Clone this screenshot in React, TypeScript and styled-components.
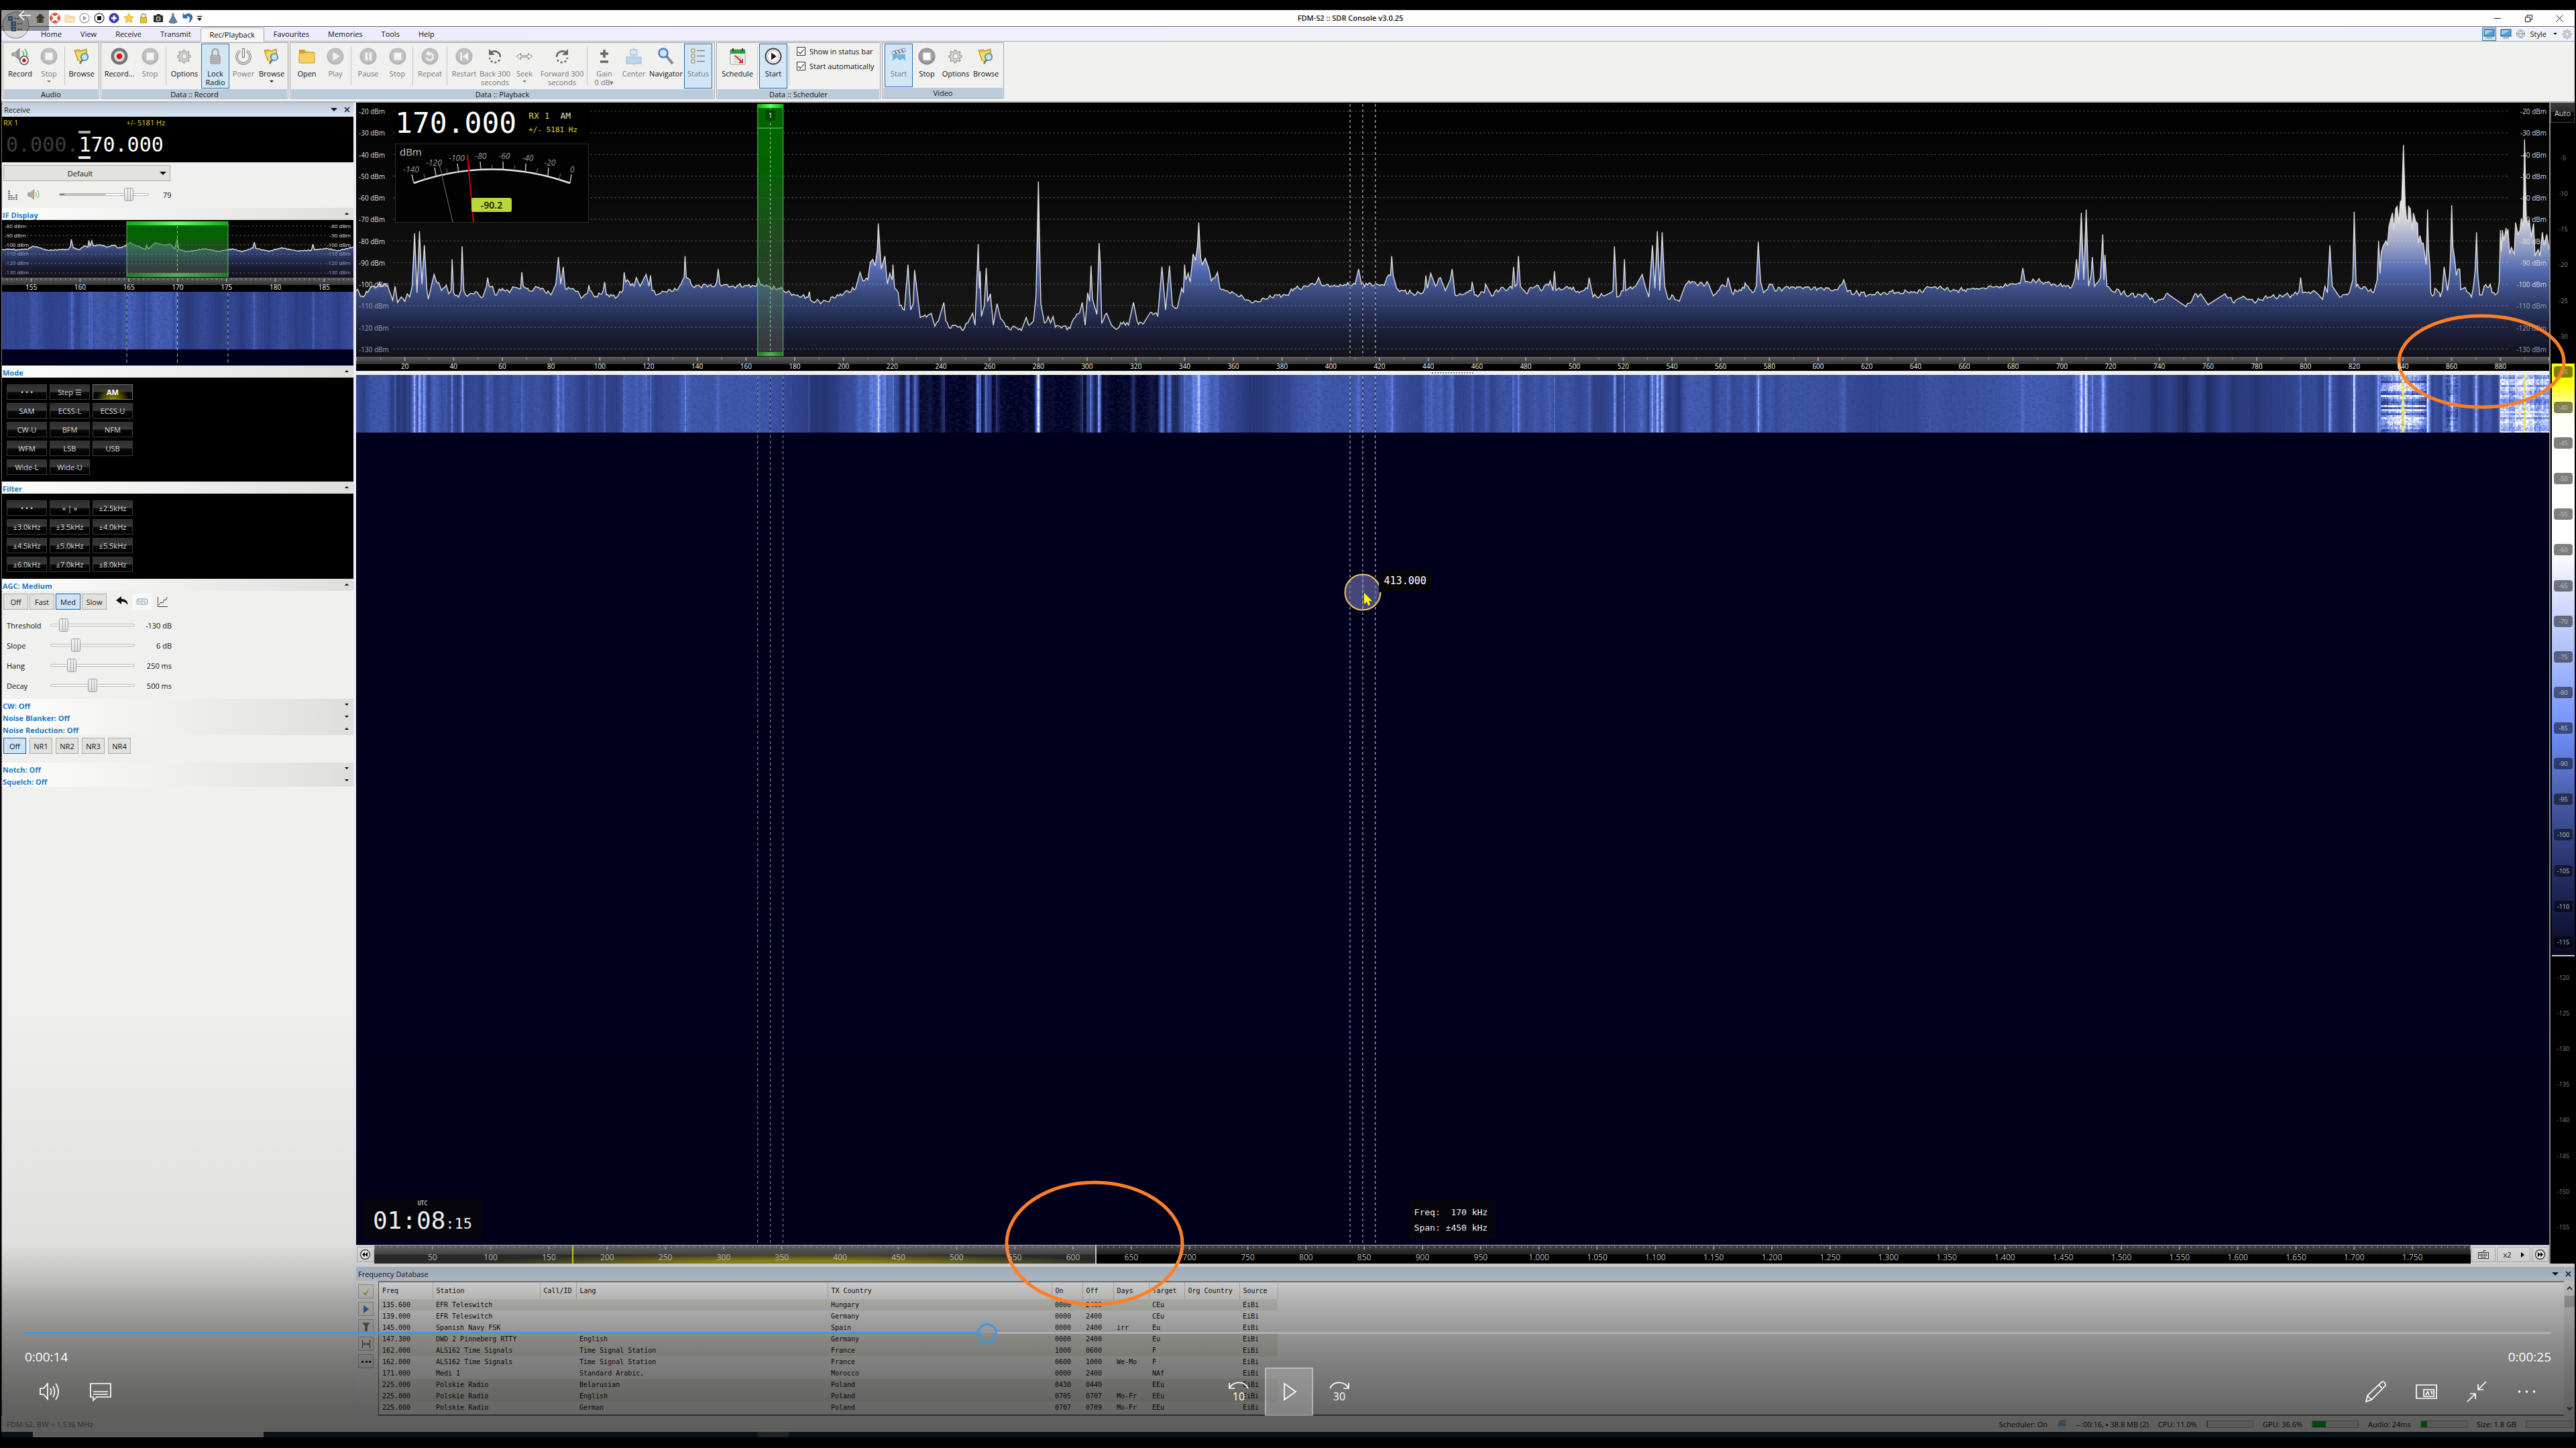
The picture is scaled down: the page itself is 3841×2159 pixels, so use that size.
import React from "react";
import styled, { createGlobalStyle, css } from "styled-components";

/* ---------- base ---------- */

const sans = `"Open Sans", "Noto Sans", sans-serif`;
const mono = `"DejaVu Sans Mono", "Liberation Mono", monospace`;

const GlobalStyle = createGlobalStyle`
  * { box-sizing: border-box; }
  body { margin: 0; background: #000; font-family: ${sans}; font-size: 11px; line-height: 13px; color: #111; }
  button, select, input { font: inherit; color: inherit; margin: 0; }
  button { padding: 0; border: 0; background: none; }
`;

const Screen = styled.div`
  position: relative;
  display: flex;
  flex-direction: column;
  min-height: 100vh;
  padding: 15px 2px 16px 2px;
  background: #000;
  overflow: hidden;
`;

const Window = styled.div`
  flex: 1;
  display: flex;
  flex-direction: column;
  min-height: 0;
  background: #f0f0ee;
`;

/* ---------- signal data: [kHz, dBm] ---------- */

type Point = [number, number];

const wideTrace: Point[] = [
  [0,-103],[3,-106],[6,-101.5],[12,-100],[13,-101],[15,-107.5],[16,-101],[17,-108.5],[18.5,-106],[20,-108],[21,-104.5],[22,-106],[23,-101],
  [24,-76.5],[25,-104],[26,-75.5],[27,-100],[28,-82],[29,-102],[29.6,-107],[32,-95.5],[33,-99],[34,-99.5],[35,-103],[37,-100.5],[38,-104.5],
  [39,-103],[39.4,-88.5],[40,-104],[42,-106],[43,-103],[43.5,-82.5],[44.2,-103],[45,-105],[49,-103.5],[52,-106],[53.5,-101],[54,-97],[54.6,-101],[56,-101],[57,-105],
  [60,-102],[63,-104],[65,-101.5],[67.5,-102],[68,-94.5],[68.6,-101],[71,-103],[75,-101.5],[80,-105],[82,-100],[83,-87.5],[84,-100],[85,-92],[85.8,-102],
  [89,-102],[93,-106],[95,-104],[95.5,-100.5],[96,-103],[99,-106],[101.4,-103],[102,-99],[102.7,-105],[107,-106],[109.5,-103],[110,-94.5],[110.6,-99],[112,-99],[114,-101],
  [115,-97],[116.5,-101],[119,-95.5],[120.3,-101],[120.8,-96],[121.5,-103],[123,-105],[127,-103.5],[132,-102.5],[134,-98],[134.6,-97],[135,-87],[135.5,-97],
  [137,-98],[137.6,-100.5],[146,-101],[148,-99],[148.6,-93],[149.3,-100],[155,-101],[160,-100.5],[164.5,-100.5],[165,-97],[166,-100.5],[175,-102.5],[180,-105],[185.5,-106],[186,-103.5],[186.5,-107.5],[190,-108],
  [193,-108],[200,-104.5],[205,-102],[206.8,-94.5],[208,-98.5],[210,-98],[211,-90],[212,-88.5],[213,-91.5],[213.9,-84],[214.3,-72],[214.9,-82],[215.5,-93],
  [217,-87],[218,-100],[219,-95],[220,-98],[220.3,-91],[221,-102],[222.5,-104],[223,-110],[225,-112],[226,-98],[226.5,-91],[227,-101],[227.6,-112],[228.6,-109],[229.2,-93.5],
  [230.5,-106],[231.5,-115.5],[236,-113.5],[237.5,-119.5],[239,-117],[241.2,-108.5],[242,-117],[244,-120.5],[246,-119],[249,-121.5],[251,-118],
  [253,-113.5],[254,-119],[255.3,-81.5],[255.8,-102],[256.1,-94],[256.6,-115],[257.8,-110],[258.6,-92.5],[259.2,-108],[260.3,-104.5],[261.5,-119],[263,-109],[264.5,-116],[266,-118],
  [268,-121],[270,-119.5],[273,-121.5],[275,-115.5],[276,-119],[278,-117],[279,-106],[280,-52.5],[281,-109],[282.5,-118],[284,-115],[285,-118],[286,-115],[287,-120],[290,-119.5],
  [293,-120.5],[294.5,-116],[297,-113],[298,-108.5],[299.2,-119],[300.2,-104],[301,-108],[301.6,-91.5],[302.2,-107],[304,-114],[304.9,-81],[305.4,-90],[306,-118],[308,-113.5],
  [310,-119],[312,-121],[315,-117.5],[317,-119],[319,-108.5],[320.5,-117],[323,-118.5],[326,-113],[329,-115],[330.7,-92],[332.2,-112],[333.8,-91.5],[335,-110],
  [337,-111],[338.8,-102],[339.5,-104],[340,-91],[340.5,-98],[341.5,-95],[342.3,-99],[343.5,-86],[344.5,-89],[345.3,-82],[345.8,-71.5],[346.6,-88],[347.3,-91],[348.5,-88],[350,-93],[351,-98.5],[352.5,-97],
  [353.5,-94.5],[354.5,-102],[360,-104],[367,-108],[373,-107],[377,-105],[382,-105],[385,-102],[390,-101],[394,-99.5],[395,-97],[396,-100],[402,-101],[410,-100],[411.4,-93],
  [412.6,-100],[422,-100.5],[423,-97],[424.5,-96],[425,-87],[425.6,-96],[427,-102],[433,-104],[437,-104.5],[438.6,-102],[439,-96],[439.6,-102],[441,-95],[443,-101],[445,-97],
  [447,-103],[449,-98],[449.8,-93],[451,-105],[455,-104.5],[457.6,-103],[458,-99],[459,-105],[463,-104],[463.5,-100],[466,-105.5],[470,-101.5],[474.4,-102],[475,-92],[475.6,-101],[476.4,-100],
  [477,-87],[477.8,-101],[480,-104],[484,-101],[487,-102.5],[490,-98.5],[491.2,-103],[491.8,-94],[492.4,-103],[497,-101],[502,-104],[505.4,-102],[506,-97],[507.6,-106],[513,-105],
  [515.8,-103],[516.4,-82.5],[517.4,-106],[520,-103],[520.5,-88.5],[521,-103],[525,-101],[527.8,-95.5],[529,-101],[530.5,-106],[532,-82],[533,-102],[534,-75.5],
  [535,-103],[536,-76],[537,-101],[538.4,-107],[540,-105],[543,-108],[545,-102],[547,-98.5],[550,-100],[555,-100],[557,-105.5],[560,-101],[562.4,-101],[563,-97],[564.6,-104],[569.6,-102],[570,-99.5],
  [573,-104],[574.6,-101],[575.4,-80.5],[576.4,-99],[577.6,-104],[580,-100],[583,-103],[587,-101],[592,-101.5],[600,-102],[608,-102.5],[609.8,-100],[610.5,-98],[612,-103.5],[622,-105],[630,-103.5],
  [640,-104],[646,-101.5],[655,-103],[665,-102],[675,-101],[683,-99.5],[684,-92.5],[685,-99],[690,-98.5],[697,-100],[704,-101.5],[705.4,-97],[706,-88.5],[706.8,-98],
  [708,-67],[709,-98],[710,-65.5],[711,-101],[712,-96],[712.5,-87.5],[713.4,-101],[715.8,-97],[716.8,-77],[717.3,-98],[717.7,-86.5],[718.5,-101],[720,-102.5],
  [728,-105],[735,-105],[738,-108.5],[744,-105],[751,-110.5],[754,-106],[757,-104.5],[760,-109.5],[767,-104.5],[770,-108],[775,-106],[780,-108],[785,-106],[795,-105],
  [797.4,-103],[798,-97],[798.8,-104],[804,-103.5],[807,-107],[808,-101],[809,-104],[810,-82],[811,-101],[814,-106],[818,-104],[819.4,-98],[820,-66.5],[820.8,-101],
  [825,-102],[828,-104],[829.4,-98],[830,-80],[830.6,-95],[831.1,-85],[832,-82],[833,-80],[833.6,-82],[834.3,-73],[835.7,-67],[836.3,-75],[837,-65],[837.6,-64],[838.3,-72],
  [838.9,-62],[839.5,-61],[840.2,-35.5],[840.9,-63],[841.5,-70],[842.1,-71],[842.3,-64],[843,-65],[843.8,-75],[844.3,-67],[845.2,-71],[846,-72],[846.3,-81],[847,-77.5],
  [847.6,-81],[848.3,-81],[849.5,-91],[850.1,-65.5],[850.5,-84],[851.1,-92],[851.4,-104],[852.7,-105],[853.1,-102],[855,-104],[855.3,-106],[856.1,-103],[856.9,-92],
  [857.5,-97],[858.3,-103],[859.1,-96],[859.5,-87],[860,-63.5],[860.5,-83],[861.2,-88],[861.9,-96],[862.6,-93],[863.3,-93],[863.7,-102.5],[865.5,-101.5],[866.9,-104],
  [868.1,-106],[868.8,-102],[869.6,-94],[870.2,-76],[870.7,-95],[871.5,-105],[872.4,-105],[873.3,-101],[875.8,-100],[876.6,-104],[877.9,-105],[878.9,-104],[879.5,-99],
  [880,-75],[880.4,-85],[880.8,-75],[881.4,-80],[882.3,-74],[882.5,-77],[883.1,-74.5],[883.8,-86],[884.5,-83],[885.7,-86],[886.2,-71.5],[887.2,-77],[888,-75],[888.6,-69.5],
  [889.3,-74],[889.9,-33],[890.6,-69],[891.3,-73],[891.8,-70],[892.6,-78],[893.6,-72],[894.2,-87],[895.5,-84],[896.2,-87],[897.2,-76],[897.9,-82],[899,-77],[900,-84],
];

const narrowTrace: Point[] = [
  [152,-105],[152.6,-104],[153.6,-105],[154.7,-104],[155.2,-101],[156.7,-105.5],[158.8,-104.5],[159,-102],[159.1,-94],[159.3,-103],[159.9,-105],[160.4,-101],[160.8,-102],[160.9,-95],[161,-101],[161.2,-95.5],
  [161.35,-101],[162,-99.5],[162.8,-102],[163.5,-100],[163.9,-103],[164.6,-101],[165.1,-97.5],[165.8,-101],[166.7,-104.5],[166.8,-100],[167,-104],[167.7,-97.5],[168.6,-100],
  [169.2,-99],[169.7,-104],[169.95,-93],[170.1,-104.5],[170.9,-107],[172.8,-104],[174.2,-106.5],[175.6,-104],[176.6,-107],[177.7,-103],[177.85,-97],[178,-103.5],[179.4,-106.5],
  [180.6,-103],[182.2,-106],[183.7,-105.5],[183.85,-99],[184,-105],[185.3,-103.5],[186.4,-106],[188,-102],
];

const hash = (n: number) => {
  const s = Math.sin(n * 127.1 + 11.7) * 43758.5453;
  return s - Math.floor(s);
};

function refine(points: Point[], step: number, jitter: number): Point[] {
  const out: Point[] = [];
  points.forEach((p, i) => {
    out.push(p);
    const next = points[i + 1];
    if (!next) return;
    const span = next[0] - p[0];
    const n = Math.floor(span / step);
    const flat = Math.abs(next[1] - p[1]) < 5;
    for (let k = 1; k < n; k++) {
      const f = p[0] + (span * k) / n;
      const ripple = flat ? (hash(f) - 0.5) * jitter + Math.sin((f / step) * 1.3) * jitter * 0.35 : 0;
      out.push([f, p[1] + ((next[1] - p[1]) * k) / n + ripple]);
    }
  });
  return out;
}

const stops: [number, number[]][] = [
  [-122, [0, 0, 30]], [-115, [8, 10, 44]], [-110, [32, 44, 96]], [-105, [50, 68, 142]], [-100, [67, 91, 174]], [-92, [84, 114, 208]],
  [-85, [112, 142, 245]], [-75, [170, 190, 255]], [-64, [250, 252, 255]], [-48, [255, 255, 250]], [-36, [238, 232, 90]],
];

function palette(db: number) {
  if (db <= stops[0][0]) return "rgb(0,0,30)";
  for (let i = 1; i < stops.length; i++) {
    if (db <= stops[i][0]) {
      const [a, ca] = stops[i - 1];
      const [b, cb] = stops[i];
      const t = (db - a) / (b - a);
      return `rgb(${ca.map((c, k) => Math.round(c + (cb[k] - c) * t)).join(",")})`;
    }
  }
  return "rgb(238,232,90)";
}

function interpolate(points: Point[], f: number) {
  const i = points.findIndex(p => p[0] >= f);
  if (i <= 0) return points[0][1];
  const [a, b] = [points[i - 1], points[i]];
  return a[1] + ((b[1] - a[1]) * (f - a[0])) / (b[0] - a[0]);
}

function levelAt(points: Point[], from: number, to: number) {
  const mid = interpolate(points, (from + to) / 2);
  const peaks = points.filter(([f]) => f >= from && f < to).map(p => p[1]);
  return Math.max(mid, ...peaks);
}

/* ---------- title bar and tabs ---------- */

const TitleBar = styled.header`
  display: flex;
  align-items: center;
  height: 24px;
  padding-left: 50px;
  background: #fff;
`;
const QuickBar = styled.div`
  display: flex;
  align-items: center;
  gap: 6px;
`;
const QuickButton = styled.button`
  display: flex;
  width: 16px;
  height: 16px;
`;
const WindowTitle = styled.h1`
  flex: 1;
  margin: 0;
  padding-left: 16px;
  text-align: center;
  font-size: 11px;
  font-weight: 600;
  line-height: 16px;
`;
const Caption = styled.button`
  display: flex;
  align-items: center;
  justify-content: center;
  width: 46px;
  height: 24px;
`;
const AppButton = styled.button`
  position: absolute;
  left: 3px;
  top: 17px;
  width: 41px;
  height: 41px;
`;
const TabBar = styled.nav`
  display: flex;
  align-items: flex-end;
  height: 23px;
  padding: 0 2px 0 45px;
  border-top: 1px solid #6c6c70;
  border-bottom: 1px solid #a8a8ac;
  background: linear-gradient(90deg, #ebebfa, #eff1fb 50%, #eef3fb);
`;
const Tab = styled.button<{ $active?: boolean }>`
  height: 20px;
  padding: 0 14px;
  line-height: 20px;
  ${p => p.$active && css`
    height: 21px;
    margin-bottom: -1px;
    padding: 0 13px;
    border: 1px solid #a8a8ac;
    border-bottom: 0;
    border-radius: 4px 4px 0 0;
    background: #f6f6f5;
  `}
`;
const TabTools = styled.div`
  display: flex;
  align-items: center;
  gap: 6px;
  height: 21px;
  margin-left: auto;
`;
const ToolButton = styled.button<{ $on?: boolean }>`
  display: flex;
  align-items: center;
  justify-content: center;
  gap: 10px;
  min-width: 16px;
  height: 20px;
  ${p => p.$on && css`
    width: 21px;
    border: 1px solid #2f78ae;
    background: #cfe4f5;
  `}
`;

/* ---------- ribbon ---------- */

const Ribbon = styled.div`
  display: flex;
  gap: 2px;
  height: 91px;
  padding: 1px 2px 4px 2px;
  border-bottom: 2px solid #b4b4b4;
  background: #f0f0ee;
`;
const Group = styled.section`
  display: flex;
  flex-direction: column;
  border: 1px solid #a5a5a8;
  background: #f0f0ee;
`;
const GroupBody = styled.div`
  display: flex;
  flex: 1;
  padding: 1px 3px;
`;
const GroupName = styled.h2`
  height: 15px;
  margin: 0 1px;
  background: #bccbda;
  text-align: center;
  font-size: 11px;
  font-weight: 400;
  line-height: 15px;
`;
const BigButton = styled.button<{ $w: number; $on?: boolean; $dim?: boolean }>`
  display: flex;
  flex-direction: column;
  align-items: center;
  width: ${p => p.$w}px;
  padding-top: 5px;
  border: 1px solid ${p => (p.$on ? "#1e70b8" : "transparent")};
  background: ${p => (p.$on ? "#d2e6f6" : "none")};
  color: ${p => (p.$dim ? "#77797c" : "#111")};
  white-space: nowrap;
  svg { margin-bottom: 6px; flex: none; }
`;
const Divider = styled.span`
  width: 1px;
  height: 57px;
  margin: 5px 2px;
  background: #c4c4c4;
`;
const Checks = styled.div`
  display: flex;
  flex-direction: column;
  gap: 8px;
  width: 130px;
  padding: 4px 0 0 9px;
`;
const CheckLabel = styled.label`
  display: flex;
  align-items: center;
  gap: 6px;
  height: 14px;
  white-space: nowrap;
`;
const CheckBox = styled.input`
  appearance: none;
  width: 13px;
  height: 13px;
  border: 1px solid #333;
  background: #fff;
  display: grid;
  place-items: center;
  &:checked::after {
    content: "";
    width: 8px;
    height: 4px;
    border-left: 1px solid #222;
    border-bottom: 1px solid #222;
    transform: translateY(-1px) rotate(-48deg);
  }
`;
const Caret = styled.span<{ $up?: boolean; $big?: boolean }>`
  width: 0;
  height: 0;
  border: ${p => (p.$big ? 5 : 3)}px solid transparent;
  ${p => (p.$up ? css`border-bottom-color: currentColor; border-top: 0;` : css`border-top-color: currentColor; border-bottom: 0;`)}
`;
const DropCaret = styled(Caret)`
  margin-top: 4px;
`;

/* ---------- icons ---------- */

const gear = "M13 5l1 0 .6 2.6 2 .8 2.3-1.4 1.6 1.6-1.4 2.3.8 2 2.6.6v2.2l-2.6.6-.8 2 1.4 2.3-1.6 1.6-2.3-1.4-2 .8-.6 2.6h-2.2l-.6-2.6-2-.8-2.3 1.4-1.6-1.6 1.4-2.3-.8-2-2.6-.6v-2.2l2.6-.6.8-2-1.4-2.3 1.6-1.6 2.3 1.4 2-.8.6-2.6z";

function Disc({ shade = "#b4b4b4", children }: { shade?: string; children: React.ReactNode }) {
  return (
    <>
      <circle cx="13" cy="13" r="12.5" fill={shade} />
      <circle cx="13" cy="12" r="10.5" fill="#fff" opacity=".18" />
      {children}
    </>
  );
}

const art: Record<string, React.ReactNode> = {
  recordAudio: (
    <>
      <path d="M1 8h4l7-7v18l-7-7H1z" fill="#c9b48a" stroke="#777" />
      <path d="M7 6l5-5v18l-5-5z" fill="#9a9a9a" />
      <path d="M16 5c3 3 3 6 1 9M20 2c4 5 4 9 2 13" fill="none" stroke="#5fc95a" strokeWidth="2" />
      <circle cx="19" cy="19" r="6.2" fill="#fff" stroke="#555" strokeWidth="1.5" />
      <circle cx="19" cy="19" r="2.8" fill="#d80d0d" />
    </>
  ),
  stop: <Disc><rect x="7.5" y="7.5" width="11" height="11" rx="1" fill="#f4f4f4" /></Disc>,
  stopOn: <Disc shade="#8d8d8d"><rect x="7.5" y="7.5" width="11" height="11" rx="1" fill="#fff" /></Disc>,
  record: (
    <>
      <circle cx="13" cy="13" r="12.5" fill="#757575" />
      <circle cx="13" cy="13" r="8" fill="#dcdcdc" />
      <circle cx="13" cy="13" r="4.2" fill="#f00" />
    </>
  ),
  play: <Disc><path d="M9.5 6.5v13l10-6.5z" fill="#f4f4f4" /></Disc>,
  pause: <Disc><path d="M8.5 7h3.5v12h-3.5zM14.5 7h3.5v12h-3.5z" fill="#f4f4f4" /></Disc>,
  repeat: <Disc><path d="M8 15a5 5 0 1 0 2-5.5M11.5 5.5l-2.5 4 4.5 1.5" fill="none" stroke="#f4f4f4" strokeWidth="2.4" /></Disc>,
  restart: <Disc><path d="M7.5 7h2.5v12h-2.5zM19 7v12l-8-6z" fill="#f4f4f4" /></Disc>,
  startRound: (
    <>
      <circle cx="13" cy="13" r="11.5" fill="#fff" stroke="#444" strokeWidth="2" />
      <circle cx="13" cy="13" r="8.5" fill="none" stroke="#aaa" />
      <path d="M10 7.5v11l8-5.5z" fill="#1c1c1c" />
    </>
  ),
  browse: (
    <>
      <path d="M2 4l7-1 2 2 9-3 1 14-9 5-5-2z" fill="#e6c23c" stroke="#a8871c" />
      <path d="M4 8l14-3 3 9-12 6z" fill="#f3da6d" />
      <circle cx="17" cy="14" r="5.2" fill="#bfe6f5" stroke="#4e8fb0" strokeWidth="1.8" />
      <path d="M14 18l-4 6" stroke="#777" strokeWidth="2.5" />
    </>
  ),
  open: (
    <>
      <path d="M1 3h8l2 3h12v17H1z" fill="#d99a1c" />
      <path d="M1 9c8-1 15-3 23-2v16H1z" fill="#f6cf63" stroke="#d39a25" />
    </>
  ),
  options: (
    <>
      <path d={gear} fill="#d6d6d6" stroke="#999" strokeWidth="1.2" transform="translate(-.5 -1.5)" />
      <circle cx="13" cy="13" r="4" fill="#f0f0ee" stroke="#999" />
    </>
  ),
  lock: (
    <>
      <path d="M8.5 13V6.5a4.5 4.5 0 0 1 9 0V13" fill="none" stroke="#999" strokeWidth="2" />
      <rect x="6" y="12" width="14" height="12" rx="1" fill="#c3c3c3" stroke="#888" />
      <path d="M7 15h12M7 18h12M7 21h12" stroke="#8b8b8b" />
    </>
  ),
  power: (
    <>
      <path d="M8 5a10 10 0 1 0 10 0" fill="none" stroke="#777" strokeWidth="3.5" />
      <path d="M8 5a10 10 0 1 0 10 0" fill="none" stroke="#eee" strokeWidth="1.5" />
      <rect x="11.5" y="1.5" width="3" height="13" fill="#eee" stroke="#777" />
    </>
  ),
  back: (
    <>
      <path d="M7 7c6-4 14 0 14 7" fill="none" stroke="#666" strokeWidth="2.6" />
      <path d="M20 18a8 8 0 0 1-15-3" fill="none" stroke="#666" strokeWidth="2.6" strokeDasharray="3 3" />
      <path d="M4 2v9h9z" fill="#666" />
    </>
  ),
  forward: (
    <>
      <path d="M19 7C13 3 5 7 5 14" fill="none" stroke="#666" strokeWidth="2.6" />
      <path d="M6 18a8 8 0 0 0 15-3" fill="none" stroke="#666" strokeWidth="2.6" strokeDasharray="3 3" />
      <path d="M22 2v9h-9z" fill="#666" />
    </>
  ),
  seek: <path d="M1.5 13l6-4.5v3.5h11V8.5l6 4.5-6 4.5V14h-11v3.5z" fill="#fff" stroke="#777" />,
  gain: <path d="M7 9h12M13 3v12M7 21h12" stroke="#666" strokeWidth="3.5" />,
  center: (
    <>
      <path d="M13 0v26" stroke="#8aa2b8" />
      <rect x="8" y="3" width="10" height="8" fill="#d5e5f2" stroke="#9ab2c8" />
      <rect x="2" y="14" width="22" height="10" fill="#b9d8f0" stroke="#9ab8d2" />
    </>
  ),
  navigator: (
    <>
      <path d="M14 13l9 11" stroke="#888" strokeWidth="4" />
      <circle cx="9" cy="8" r="6.5" fill="#cdeafc" stroke="#4a7fc4" strokeWidth="2.5" />
    </>
  ),
  status: (
    <>
      <path d="M3 2h5v5H3zM3 10h5v5H3z" fill="#efe6a4" stroke="#888" />
      <path d="M3 18h5v5H3z" fill="#cfe6fb" stroke="#888" />
      <path d="M11 4.500h12M11 12.500h12M11 20.500h12" stroke="#888" strokeWidth="1.5" />
    </>
  ),
  schedule: (
    <>
      <rect x="2" y="3" width="22" height="22" rx="1" fill="#f7f7f7" stroke="#999" />
      <path d="M2 3h22v6H2z" fill="#2f9c31" />
      <path d="M6 1v4M20 1v4" stroke="#333" strokeWidth="2" />
      <path d="M5 13h16M5 17h16M5 21h16M9 10v14M13 10v14M17 10v14" stroke="#c4c4c4" />
      <path d="M9 12l11 10M20 17v5h-5" fill="none" stroke="#cc2a2a" strokeWidth="1.8" />
    </>
  ),
  clapper: (
    <>
      <path d="M3 6l19-5 1 5-19 4z" fill="#e6eef4" stroke="#889" />
      <path d="M7 5l3 4M12 4l3 4M17 3l3 4" stroke="#667" strokeWidth="2" />
      <rect x="4" y="10" width="19" height="15" fill="#6fb6dc" />
      <path d="M4 20l6-5 5 4 4-3 4 4v5H4z" fill="#cfeaf7" />
    </>
  ),
};

function Icon({ name, size = 26 }: { name: string; size?: number }) {
  return <svg width={size} height={size} viewBox="0 0 26 26" aria-hidden="true">{art[name]}</svg>;
}

const quick: [string, React.ReactNode][] = [
  ["Home", <><path d="M1 8l7-7 7 7z" fill="#5f5a52" /><path d="M3 8h10v7H3z" fill="#8c877c" /><path d="M6 9h4v6H6z" fill="#8a4a12" /></>],
  ["Support", <><circle cx="8" cy="8" r="5.3" fill="none" stroke="#e3592b" strokeWidth="4" /><path d="M3 3l3 3M10 10l3 3M13 3l-3 3M6 10l-3 3" stroke="#fff" strokeWidth="2.5" /><circle cx="8" cy="8" r="7.5" fill="none" stroke="#a03a14" strokeWidth=".8" /></>],
  ["Open", <path d="M1 3h5l2 2h7v9H1zM1 14l2-7h13l-2 7z" fill="#fbe7bd" stroke="#ecd09a" />],
  ["Play", <><circle cx="8" cy="8" r="7" fill="#fff" stroke="#aaa" strokeWidth="1.5" /><path d="M6 4.5v7l5.5-3.5z" fill="#999" /></>],
  ["Stop", <><circle cx="8" cy="8" r="7" fill="#fff" stroke="#555" strokeWidth="1.5" /><rect x="5" y="5" width="6" height="6" fill="#111" /></>],
  ["Add", <><circle cx="8" cy="8" r="7" fill="#3d3dbd" stroke="#24248a" /><path d="M8 4v8M4 8h8" stroke="#fff" strokeWidth="2.5" /></>],
  ["Favourite", <path d="M8 1l2.1 4.7 5.1.5-3.9 3.4 1.2 5L8 12l-4.5 2.6 1.2-5L.8 6.2l5.1-.5z" fill="#fcd34a" stroke="#d99b22" />],
  ["Lock", <><path d="M5 8V4.5a3 3 0 0 1 6 0V8" fill="none" stroke="#999" strokeWidth="1.6" /><rect x="3.5" y="7" width="9" height="8" fill="#f0c419" stroke="#b98e10" /></>],
  ["Snapshot", <><path d="M1 4h4l1-2h5l1 2h3v10H1z" fill="#2a2a2a" /><circle cx="8" cy="9" r="3.5" fill="#bbb" /><circle cx="8" cy="9" r="2" fill="#333" /></>],
  ["Marker", <><path d="M8 3l6 11c-3 2-9 2-12 0z" fill="#5f86b4" stroke="#3d5c86" /><circle cx="8" cy="2.5" r="2" fill="#5f86b4" /></>],
  ["Undo", <path d="M1 1v7h7L5.500 5.500c4-2 8 1 4.500 9 7-5 6-13-1-13-2 0-4 1-5.500 2z" fill="#2f6fc6" stroke="#1f4f9a" strokeWidth=".7" />],
];

/* ---------- side panel ---------- */

const Workspace = styled.div`
  flex: 1;
  display: flex;
  min-height: 0;
`;
const Side = styled.aside`
  width: 529px;
  flex: none;
  border-left: 1px solid #707070;
  border-right: 4px solid #ecebf7;
  background: #f0f0ee;
`;
const DockTitle = styled.h2`
  display: flex;
  align-items: center;
  gap: 8px;
  height: 21px;
  margin: 0;
  padding: 0 4px 0 3px;
  background: linear-gradient(#bccbdc, #d9e4f1);
  font-size: 11px;
  font-weight: 400;
  span:first-child { flex: 1; }
`;
const DockClose = styled.button`
  display: flex;
  align-items: center;
  justify-content: center;
  width: 12px;
  height: 16px;
`;
const Tuner = styled.div`
  display: flex;
  flex-direction: column;
  height: 68px;
  padding: 2px 0 0 2px;
  background: #000;
  color: #e5d42a;
`;
const TunerTop = styled.div`
  display: flex;
  gap: 161px;
`;
const TunerDigits = styled.div`
  display: flex;
  margin: 6px 0 0 4px;
  font-family: ${mono};
  font-size: 30px;
  line-height: 42px;
  color: #3c3c3c;
`;
const Digits = styled.span<{ $edit?: boolean }>`
  color: #fff;
  ${p => p.$edit && css`
    height: 42px;
    border-top: 4px solid #aaa;
    border-bottom: 4px solid #eee;
    line-height: 34px;
  `}
`;
const Presets = styled.div`
  padding: 4px 2px 0;
`;
const PresetSelect = styled.select`
  display: block;
  width: 249px;
  height: 24px;
  padding: 0 20px 0 0;
  border: 1px solid #aaa;
  border-radius: 0;
  appearance: none;
  background: #e2e2df;
  text-align: center;
  text-align-last: center;
`;
const SelectWrap = styled.div`
  position: relative;
  width: 249px;
  > span { position: absolute; right: 6px; top: 10px; }
`;
const VolumeRow = styled.div`
  display: flex;
  align-items: center;
  height: 40px;
  padding-left: 6px;
  svg { margin-right: 14px; }
  input { margin-left: 15px; }
  output { margin-left: 21px; }
`;
const Range = styled.input<{ $w: number; $fill?: boolean }>`
  appearance: none;
  width: ${p => p.$w}px;
  height: 22px;
  background: none;
  &::-webkit-slider-runnable-track {
    height: 4px;
    border: 1px solid #b8b8b8;
    border-radius: 2px;
    background: ${p => (p.$fill ? "linear-gradient(90deg, #4e9a4e 5%, #c0c0bd 5%, #c0c0bd 52%, #fff 52%)" : "#fff")};
  }
  &::-webkit-slider-thumb {
    appearance: none;
    width: 14px;
    height: 20px;
    margin-top: -9px;
    border: 1px solid #a2a2a2;
    border-radius: 3px;
    background: linear-gradient(90deg, transparent 4px, #aaa 4px, #aaa 5px, transparent 5px, transparent 8px, #aaa 8px, #aaa 9px, transparent 9px), linear-gradient(#f4f4f4, #dcdcdc);
  }
`;
const Section = styled.h3`
  display: flex;
  align-items: center;
  justify-content: space-between;
  height: 18px;
  margin: 0;
  padding: 3px 7px 0 1px;
  background: linear-gradient(90deg, #fdfdfc, #ededeb 55%, #dededb);
  color: #1c7ac8;
  font-size: 11px;
  font-weight: 700;
  line-height: 15px;
  > span:last-child { color: #000; margin-bottom: 4px; }
`;
const Pad = styled.div`
  display: grid;
  grid-template-columns: repeat(3, 60px);
  grid-auto-rows: 23px;
  gap: 5px 4px;
  padding: 10px 7px;
  background: #000;
`;
const PadButton = styled.button<{ $on?: boolean }>`
  border: 1px solid ${p => (p.$on ? "#777" : "#3a3a3a")};
  background: ${p => (p.$on ? "radial-gradient(ellipse at 50% 100%, #8f8800, #4a4600 35%, transparent 60%)," : "")} linear-gradient(#2e2e2e, #3a3a3a 48%, #0a0a0a 52%, #000);
  color: ${p => (p.$on ? "#fff" : "#dadada")};
  font-weight: ${p => (p.$on ? 700 : 400)};
`;
const ToggleRow = styled.div<{ $gap: number }>`
  display: flex;
  gap: ${p => p.$gap}px;
  padding: 4px 2px 0;
`;
const Toggle = styled.button<{ $w: number; $on?: boolean }>`
  width: ${p => p.$w}px;
  height: 24px;
  border: 1px solid ${p => (p.$on ? "#2b6292" : "#acacac")};
  background: ${p => (p.$on ? "#cde4f7" : "#e1e1de")};
`;
const IconTile = styled.button<{ $lit?: boolean }>`
  display: flex;
  align-items: center;
  justify-content: center;
  width: 28px;
  height: 24px;
  background: ${p => (p.$lit ? "#f8f8f7" : "none")};
`;
const AgcTools = styled.div`
  display: flex;
  gap: 2px;
  margin-left: 7px;
`;
const AgcBody = styled.div`
  height: 161px;
`;
const SliderRow = styled.div`
  display: grid;
  grid-template-columns: 65px 126px 55px;
  align-items: center;
  height: 30px;
  padding-left: 7px;
  output { text-align: right; }
`;
const AgcRows = styled.div`
  margin-top: 8px;
`;
const NrBody = styled.div`
  height: 41px;
`;

/* ---------- spectrum displays ---------- */

const Stack = styled.div`
  position: relative;
`;
const Plot = styled.svg<{ $h: number }>`
  display: block;
  width: 100%;
  height: ${p => p.$h}px;
  background: linear-gradient(#000, #161616 85%);
`;
const Fill = styled.svg`
  position: absolute;
  inset: 0;
  width: 100%;
  height: 100%;
`;
const DbLabels = styled.div<{ $right?: boolean; $small?: boolean }>`
  position: absolute;
  top: ${p => (p.$small ? 3 : 5)}px;
  bottom: ${p => (p.$small ? 2 : 3)}px;
  ${p => (p.$right ? "right: 4px;" : "left: 4px;")}
  display: flex;
  flex-direction: column;
  justify-content: space-between;
  align-items: ${p => (p.$right ? "flex-end" : "flex-start")};
  color: #ddd;
  font-size: ${p => (p.$small ? 8 : 10)}px;
  line-height: ${p => (p.$small ? 12 : 16)}px;
  span:nth-last-child(-n + 3) { color: #9aa1bd; }
`;
const Ruler = styled.div<{ $cells: string; $size: number }>`
  position: relative;
  display: grid;
  grid-template-columns: ${p => p.$cells};
  height: 21px;
  background: linear-gradient(#5c5c5c, #333 50%, #000 55%);
  color: #f4f4f4;
  text-align: center;
  font-size: ${p => p.$size}px;
  line-height: 12px;
  > span { padding-top: 8px; min-width: 0; z-index: 1; }
`;
const MiniFall = styled.div`
  position: relative;
  height: 110px;
  background: #00001e;
`;
const Display = styled.div`
  flex: 1;
  display: flex;
  flex-direction: column;
  min-width: 0;
`;
const Splitter = styled.div`
  display: flex;
  justify-content: center;
  align-items: center;
  height: 6px;
  background: #f0f0ee;
  &::after {
    content: "";
    width: 62px;
    height: 2px;
    background: repeating-linear-gradient(90deg, #888 0 2px, transparent 2px 4px);
  }
`;
const FallPane = styled.div`
  position: relative;
  flex: 1;
  background: #00001e;
`;
const Readout = styled.div`
  position: absolute;
  left: 58px;
  top: 8px;
  width: 289px;
  display: flex;
  flex-direction: column;
  background: #000;
`;
const ReadoutRow = styled.div`
  display: flex;
  align-items: center;
  gap: 18px;
  height: 44px;
  font-family: ${mono};
  color: #fff;
  strong { font-size: 43px; font-weight: 400; line-height: 44px; }
`;
const ReadoutNotes = styled.div`
  display: flex;
  flex-direction: column;
  gap: 5px;
  font-size: 13px;
  line-height: 16px;
  color: #e5d42a;
  em { font-style: normal; color: #ddd; margin-left: 16px; }
  small { font-size: 11px; line-height: 16px; }
`;
const Meter = styled.svg`
  display: block;
  margin-top: 9px;
  font-family: ${sans};
`;
const Cursor = styled.svg`
  position: absolute;
  left: calc(100% * 413 / 900 - 28px);
  top: 296px;
`;
const CursorTag = styled.div`
  position: absolute;
  left: calc(100% * 413 / 900 + 24px);
  top: 290px;
  padding: 0 8px;
  background: #05050a;
  color: #fff;
  font: 15px/34px ${mono};
`;
const Clock = styled.div`
  position: absolute;
  left: 10px;
  bottom: 9px;
  width: 178px;
  height: 61px;
  padding-top: 4px;
  border-radius: 4px;
  background: #05050c;
  color: #fff;
  text-align: center;
  font-family: ${mono};
  font-size: 36px;
  line-height: 42px;
  small { display: block; font-size: 8px; line-height: 9px; }
  sub { font-size: 22px; vertical-align: baseline; }
`;
const SpanBox = styled.pre`
  position: absolute;
  left: 48%;
  bottom: 9px;
  margin: 0;
  padding: 7px 12px 5px 8px;
  border-radius: 4px;
  background: #05050c;
  color: #fff;
  font: 13px/23px ${mono};
`;
const LevelColumn = styled.aside`
  width: 38px;
  flex: none;
  display: flex;
  flex-direction: column;
  padding-bottom: 28px;
  border-left: 2px solid #8c8c8c;
  background: #000;
`;
const AutoButton = styled.button`
  height: 30px;
  margin-bottom: 26px;
  border: 1px solid #444;
  background: linear-gradient(#3c3c3c, #2a2a2a 45%, #050505 50%);
  color: #ddd;
`;
const Levels = styled.ol`
  flex: 1;
  display: flex;
  flex-direction: column;
  margin: 0 0 0 2px;
  padding: 0;
  list-style: none;
  background: linear-gradient(#000 20.2%, #ff0 20.2%, #ff0 21.9%, #fffffa 25.1%, #fff 37%, #dde4fb 40.7%, #aabdfc 46.8%, #7090fb 53.4%, #4558a2 60.1%, #252f66 66.2%, #090920 73.8%, #ccc 73.8%, #ccc 73.87%, #000 73.87%);
`;
const Level = styled.li<{ $chip?: boolean }>`
  flex: 1;
  display: flex;
  align-items: center;
  justify-content: center;
  color: ${p => (p.$chip ? "#c6c6c6" : "#8a8a8a")};
  font-size: 9px;
  span {
    width: 28px;
    height: 17px;
    border-radius: 4px;
    text-align: center;
    line-height: 17px;
    background: ${p => (p.$chip ? "rgba(0, 0, 0, 0.5)" : "none")};
  }
`;

function Grid({ top, step, count, from, to }: { top: number; step: number; count: number; from: string; to: string }) {
  return (
    <>
      {Array.from({ length: count }, (_, i) => (
        <line key={i} x1={from} x2={to} y1={top + i * step} y2={top + i * step} stroke="#fff" strokeOpacity=".4" strokeDasharray="2 4" />
      ))}
    </>
  );
}

function Trace({ id, points, start, span, height, y }: { id: string; points: Point[]; start: number; span: number; height: number; y: (db: number) => number }) {
  const d = points.map(([f, db]) => `${((f - start) * 10).toFixed(1)} ${y(db).toFixed(1)}`).join("L");
  return (
    <svg width="100%" height={height} viewBox={`0 0 ${span * 10} ${height}`} preserveAspectRatio="none">
      <defs>
        <linearGradient id={id} gradientUnits="userSpaceOnUse" x1="0" x2="0" y1={y(-60)} y2={y(-133)}>
          <stop offset="0" stopColor="#e6e6e4" />
          <stop offset=".14" stopColor="#d2d3d9" />
          <stop offset=".3" stopColor="#98a2c6" />
          <stop offset=".46" stopColor="#5369b0" />
          <stop offset=".55" stopColor="#43568f" />
          <stop offset=".68" stopColor="#2e3b68" />
          <stop offset=".82" stopColor="#1d223d" />
          <stop offset="1" stopColor="#13111b" />
        </linearGradient>
      </defs>
      <path d={`M0 ${height}L${d}L${span * 10} ${height}z`} fill={`url(#${id})`} />
      <path d={`M${d}`} fill="none" stroke="#dcdcdc" strokeWidth="1.4" vectorEffect="non-scaling-stroke" />
    </svg>
  );
}

function PassBand({ from, to, height }: { from: number; to: number; height: number }) {
  const mid = `${(from + to) / 2}%`;
  const w = `${to - from}%`;
  return (
    <>
      <defs>
        <linearGradient id={`band${height}`} x1="0" x2="0" y1="0" y2="1">
          <stop offset="0" stopColor="#006c00" stopOpacity=".95" />
          <stop offset=".25" stopColor="#007800" stopOpacity=".8" />
          <stop offset=".6" stopColor="#3f8a3f" stopOpacity=".42" />
          <stop offset="1" stopColor="#5a585e" stopOpacity=".5" />
        </linearGradient>
        <linearGradient id={`cap${height}`}>
          <stop offset="0" stopColor="#10a810" />
          <stop offset=".5" stopColor="#66ff66" />
          <stop offset="1" stopColor="#10a810" />
        </linearGradient>
      </defs>
      <rect x={`${from}%`} y="2" width={w} height={height - 3} fill={`url(#band${height})`} />
      <rect x={`${from}%`} y="2" width={w} height="6" fill={`url(#cap${height})`} />
      <rect x={`${from}%`} y={height - 7} width={w} height="6" fill={`url(#cap${height})`} opacity=".6" />
      <line x1={`${from}%`} x2={`${from}%`} y1="2" y2={height - 1} stroke="#5fc85f" />
      <line x1={`${to}%`} x2={`${to}%`} y1="2" y2={height - 1} stroke="#5fc85f" />
      <line x1={mid} x2={mid} y1="9" y2={height - 8} stroke="#8fd08f" strokeDasharray="4 3" />
    </>
  );
}

const wide = refine(wideTrace, 0.6, 1.5);
const narrow = refine(narrowTrace, 0.08, 0.7);

function Waterfall({ id, points, start, span, cols, height, bursts = [] }: { id: string; points: Point[]; start: number; span: number; cols: number; height: number; bursts?: [number, number, number, number][] }) {
  const step = span / cols;
  return (
    <svg width="100%" height={height} viewBox={`0 0 ${cols} ${height}`} preserveAspectRatio="none" shapeRendering="crispEdges">
      {Array.from({ length: cols }, (_, i) => {
        const f = start + i * step;
        return <rect key={i} x={i} y="0" width="1.1" height={height} fill={palette(levelAt(points, f, f + step) + (hash(i) - 0.5) * 0.8)} />;
      })}
      {bursts.map(([from, to, lift, depth]) =>
        Array.from({ length: Math.floor(height / 3) + 1 }, (_, row) => {
          const fade = Math.pow(hash(row + from), 1.6) * depth;
          const n = Math.round((to - from) / 0.5);
          return Array.from({ length: n }, (_, k) => {
            const f = from + k * 0.5;
            const db = levelAt(points, f, f + 0.5);
            const cell = db > -55 ? -38 : Math.min(-52, Math.max(-106, db + lift - fade + hash(row * 31 + k + from) * 14 - 7));
            return <rect key={`${from}-${row}-${k}`} x={f / step} y={row * 3} width={0.5 / step + 0.1} height="3" fill={palette(cell)} />;
          });
        })
      )}
      <filter id={id} x="0" y="0" width="100%" height="100%">
        <feTurbulence type="fractalNoise" baseFrequency="0.4 0.3" numOctaves="2" seed="4" />
        <feColorMatrix values="0 0 0 0 0.02  0 0 0 0 0.04  0 0 0 0 0.25  2.2 0 0 0 -0.9" />
      </filter>
      <rect width={cols} height={height} filter={`url(#${id})`} opacity=".35" />
    </svg>
  );
}

function Ticks({ step, major, span, start = 0 }: { step: number; major: number; span: number; start?: number }) {
  const first = Math.ceil(start / step) * step;
  return (
    <Fill aria-hidden="true">
      {Array.from({ length: Math.floor((start + span - first) / step) + 1 }, (_, i) => {
        const v = first + i * step;
        const x = `${((v - start) / span) * 100}%`;
        return <line key={v} x1={x} x2={x} y1="1" y2={v % major === 0 ? 6 : 4} stroke="#999" strokeWidth={v % major === 0 ? 2 : 1} />;
      })}
    </Fill>
  );
}

function VerticalMarks({ at, color, dash, top = 2 }: { at: number[]; color: string; dash: string; top?: number }) {
  return (
    <>
      {at.map(x => (
        <g key={x}>
          <line x1={`${x}%`} x2={`${x}%`} y1={top} y2="100%" stroke="#000" strokeOpacity=".6" />
          <line x1={`${x}%`} x2={`${x}%`} y1={top} y2="100%" stroke={color} strokeDasharray={dash} />
        </g>
      ))}
    </>
  );
}

const bandMarks = [164.8, 170, 175.2].map(f => f / 9);
const hoverMarks = [407.9, 413.1, 418.3].map(f => f / 9);

/* ---------- navigator ---------- */

const NavBar = styled.div`
  display: flex;
  height: 28px;
  border-top: 1px solid #b8b0c0;
  background: #f4f4f4;
`;
const NavButton = styled.button<{ $w: number }>`
  display: flex;
  align-items: center;
  justify-content: center;
  gap: 14px;
  width: ${p => p.$w}px;
  margin: 2px 1px;
  border: 1px solid #b8b8b8;
  background: #ececec;
`;
const NavRuler = styled(Ruler)`
  flex: 1;
  height: 27px;
  background:
    linear-gradient(90deg, transparent 9.44%, #e8dc20 9.44%, #e8dc20 9.5%, transparent 9.5%, transparent 34.4%, #ddd 34.4%, #ddd 34.44%, transparent 34.44%),
    radial-gradient(ellipse 15% 16px at 20% 100%, #98901c 30%, transparent 100%),
    linear-gradient(90deg, rgba(255, 255, 255, 0.18) 34.4%, transparent 34.4%),
    linear-gradient(#4a4a4a, #222 49%, #000 51%);
  color: #b4b4b2;
  > span { padding-top: 12px; }
`;

/* ---------- frequency database ---------- */

const Database = styled.section`
  margin-top: 5px;
`;
const DbBody = styled.div`
  display: flex;
  height: 201px;
`;
const DbTools = styled.div`
  display: flex;
  flex-direction: column;
  gap: 5px;
  width: 33px;
  padding: 5px 0 0 3px;
`;
const DbTool = styled.button`
  display: flex;
  align-items: center;
  justify-content: center;
  width: 23px;
  height: 21px;
  border: 1px solid #b0b0b0;
  background: #eaeae8;
`;
const Sheet = styled.div`
  flex: 1;
  min-width: 0;
  border-top: 2px solid #888;
  border-left: 1px solid #666;
  border-bottom: 2px solid #777;
  background: #fff;
  overflow: hidden;
`;
const Table = styled.table`
  border-collapse: collapse;
  table-layout: fixed;
  width: 1340px;
  font: 10px/16px ${mono};
  th { height: 25px; padding: 0 5px; border-right: 1px solid #d4d4d4; text-align: left; font-weight: 400; white-space: nowrap; }
  td { height: 17px; padding: 0 5px; white-space: nowrap; }
`;
const Row = styled.tr<{ $tint?: boolean }>`
  background: ${p => (p.$tint ? "#efefe6" : "#fff")};
`;
const ScrollTrack = styled.div`
  display: flex;
  flex-direction: column;
  align-items: center;
  justify-content: space-between;
  width: 16px;
  padding: 8px 0;
  background: #eee;
  > i { width: 15px; height: 17px; margin: 8px 0 auto; background: #c2c2c2; }
`;

/* ---------- status bar ---------- */

const StatusBar = styled.footer`
  display: flex;
  align-items: center;
  gap: 14px;
  height: 24px;
  padding: 0 3px 0 8px;
  background: #f0f0ee;
  > span:first-child { flex: 1; color: #777; }
`;
const Gauge = styled.div`
  width: 70px;
  height: 11px;
  border: 1px solid #aaa;
  background: #e4e4e2;
`;
const GaugeFill = styled.div<{ $part: number }>`
  width: ${p => p.$part}%;
  height: 9px;
  background: #06b025;
`;
const TaskStrip = styled.div`
  display: flex;
  height: 8px;
  padding-left: 47px;
  background: #16303c;
  &::before { content: ""; width: 344px; background: #e8e8e6; }
  &::after { content: ""; width: 46px; margin-left: 737px; background: #4c5a62; }
`;

/* ---------- player overlay ---------- */

const Player = styled.div`
  position: absolute;
  inset: auto 0 0 0;
  height: 680px;
  display: flex;
  flex-direction: column;
  justify-content: flex-end;
  padding: 0 37px 48px;
  background: linear-gradient(transparent, rgba(0, 0, 0, 0.07) 55%, rgba(0, 0, 0, 0.2) 63%, rgba(0, 0, 0, 0.31) 68%, rgba(0, 0, 0, 0.42) 75%, rgba(0, 0, 0, 0.51) 82%, rgba(0, 0, 0, 0.6) 92%, rgba(0, 0, 0, 0.62));
  color: #fff;
`;
const Seek = styled.input`
  appearance: none;
  width: 100%;
  height: 30px;
  background: none;
  &::-webkit-slider-runnable-track {
    height: 3px;
    background: linear-gradient(90deg, #3e97e2 37.69%, transparent 37.69%, transparent 38.48%, rgba(255, 255, 255, 0.25) 38.48%);
  }
  &::-webkit-slider-thumb {
    appearance: none;
    width: 30px;
    height: 30px;
    margin-top: -13px;
    border: 3px solid #3e97e2;
    border-radius: 50%;
    background: transparent;
  }
`;
const Times = styled.div`
  display: flex;
  justify-content: space-between;
  margin: 8px 0 3px;
  font-size: 19px;
  line-height: 26px;
`;
const Controls = styled.div`
  display: grid;
  grid-template-columns: 1fr auto 1fr;
  padding-left: 2px;
`;
const ControlSet = styled.div<{ $end?: boolean }>`
  display: flex;
  gap: 3px;
  justify-content: ${p => (p.$end ? "flex-end" : "flex-start")};
`;
const Control = styled.button<{ $lit?: boolean }>`
  display: flex;
  align-items: center;
  justify-content: center;
  width: 72px;
  height: 72px;
  ${p => p.$lit && css`
    border: 2px solid rgba(255, 255, 255, 0.35);
    background: rgba(255, 255, 255, 0.2);
  `}
`;
const BackButton = styled.button`
  position: absolute;
  left: 0;
  top: 0;
  display: flex;
  align-items: center;
  justify-content: center;
  width: 73px;
  height: 46px;
  background: rgba(0, 0, 0, 0.4);
`;
const Ring = styled.svg<{ $place: string }>`
  position: absolute;
  ${p => p.$place}
`;

const line = { fill: "none", stroke: "#fff", strokeWidth: 1.7 } as const;

function PlayerControl({ label, lit, children }: { label: string; lit?: boolean; children: React.ReactNode }) {
  return (
    <Control aria-label={label} $lit={lit}>
      <svg width="32" height="40" viewBox="0 -4 32 40" {...line}>{children}</svg>
    </Control>
  );
}

/* ---------- content ---------- */

type Cmd = [string, string, number, { second?: string; dim?: boolean; on?: boolean; drop?: boolean }?] | "|";

const groups: { name: string; items: Cmd[] }[] = [
  { name: "Audio", items: [["Record", "recordAudio", 44], ["Stop", "stop", 42, { dim: true, drop: true }], "|", ["Browse", "browse", 45]] },
  { name: "Data :: Record", items: [["Record...", "record", 48], ["Stop", "stop", 43, { dim: true }], "|", ["Options", "options", 50], ["Lock", "lock", 42, { second: "Radio", on: true }], ["Power", "power", 42, { dim: true }], ["Browse", "browse", 42, { drop: true }]] },
  { name: "Data :: Playback", items: [["Open", "open", 43], ["Play", "play", 42, { dim: true }], "|", ["Pause", "pause", 46, { dim: true }], ["Stop", "stop", 41, { dim: true }], "|", ["Repeat", "repeat", 46, { dim: true }], "|", ["Restart", "restart", 46, { dim: true }], ["Back 300", "back", 46, { dim: true, second: "seconds" }], ["Seek", "seek", 42, { dim: true, drop: true }], ["Forward 300", "forward", 70, { dim: true, second: "seconds" }], "|", ["Gain", "gain", 46, { dim: true, second: "0 dB▾" }], ["Center", "center", 42, { dim: true }], ["Navigator", "navigator", 54], ["Status", "status", 42, { dim: true, on: true }]] },
  { name: "Data :: Scheduler", items: [["Schedule", "schedule", 55], "|", ["Start", "startRound", 42, { on: true }], "|"] },
  { name: "Video", items: [["Start", "clapper", 42, { dim: true, on: true }], ["Stop", "stopOn", 42], ["Options", "options", 44], ["Browse", "browse", 46]] },
];

const modes = ["• • •", "Step ☰", "AM", "SAM", "ECSS-L", "ECSS-U", "CW-U", "BFM", "NFM", "WFM", "LSB", "USB", "Wide-L", "Wide-U"];
const filters = ["• • •", "« | »", "±2.5kHz", "±3.0kHz", "±3.5kHz", "±4.0kHz", "±4.5kHz", "±5.0kHz", "±5.5kHz", "±6.0kHz", "±7.0kHz", "±8.0kHz"];
const agc: [string, number, string][] = [["Threshold", 11, "-130 dB"], ["Slope", 27, "6 dB"], ["Hang", 22, "250 ms"], ["Decay", 50, "500 ms"]];

const columns: [string, number][] = [["Freq", 80], ["Station", 160], ["Call/ID", 54], ["Lang", 375], ["TX Country", 334], ["On", 46], ["Off", 46], ["Days", 53], ["Target", 53], ["Org Country", 82], ["Source", 57]];
const stations = [
  ["135.600", "EFR Teleswitch", "", "", "Hungary", "0000", "2400", "", "CEu", "", "EiBi"],
  ["139.000", "EFR Teleswitch", "", "", "Germany", "0000", "2400", "", "CEu", "", "EiBi"],
  ["145.000", "Spanish Navy FSK", "", "", "Spain", "0000", "2400", "irr", "Eu", "", "EiBi"],
  ["147.300", "DWD 2 Pinneberg RTTY", "", "English", "Germany", "0000", "2400", "", "Eu", "", "EiBi"],
  ["162.000", "ALS162 Time Signals", "", "Time Signal Station", "France", "1000", "0600", "", "F", "", "EiBi"],
  ["162.000", "ALS162 Time Signals", "", "Time Signal Station", "France", "0600", "1000", "We-Mo", "F", "", "EiBi"],
  ["171.000", "Medi 1", "", "Standard Arabic,", "Morocco", "0000", "2400", "", "NAf", "", "EiBi"],
  ["225.000", "Polskie Radio", "", "Belarusian", "Poland", "0430", "0440", "", "EEu", "", "EiBi"],
  ["225.000", "Polskie Radio", "", "English", "Poland", "0705", "0707", "Mo-Fr", "EEu", "", "EiBi"],
  ["225.000", "Polskie Radio", "", "German", "Poland", "0707", "0709", "Mo-Fr", "EEu", "", "EiBi"],
];

const meterMarks: [string, number, number][] = [["-140", 24, 38], ["-120", 58, 28], ["-100", 92, 21], ["-80", 128, 18], ["-60", 163, 18], ["-40", 198, 21], ["-20", 231, 28], ["0", 264, 38]];

function Monitor() {
  return (
    <svg width="17" height="15" viewBox="0 0 17 15" aria-hidden="true">
      <rect x="1" y="1" width="15" height="10" fill="#4aa3e8" stroke="#33475a" />
      <path d="M2 2h13L2 9z" fill="#9fd3fa" />
      <path d="M4 13.5h9" stroke="#9aa" strokeWidth="2" />
    </svg>
  );
}

function SMeter() {
  return (
    <Meter width="289" height="118" viewBox="0 0 289 118">
      <rect x=".5" y=".5" width="288" height="117" fill="#020202" stroke="#2b2b2b" />
      <text x="7" y="18" fontSize="15" fill="#c4c4c4">dBm</text>
      <path d="M28 59Q144 18 261 59" fill="none" stroke="#e8e8e8" strokeWidth="2.4" />
      {meterMarks.map(([t, x, y], i) => (
        <g key={t}>
          <text x={x} y={y + 5} fontSize="12" fontStyle="italic" fill="#999" textAnchor="middle">{t}</text>
          <line x1={28 + i * 33.3} x2={25 + i * 34} y1={[59, 49, 42, 39, 39, 42, 49, 59][i]} y2={[46, 36, 30, 27, 27, 30, 36, 46][i]} stroke="#bbb" strokeWidth="1.5" />
        </g>
      ))}
      {[0, 1, 2, 3, 4, 5, 6].map(i => (
        <line key={i} x1={44.6 + i * 33.3} x2={43 + i * 34} y1={[54, 45, 40, 38, 40, 45, 54][i]} y2={[45, 37, 33, 31, 33, 37, 45][i]} stroke="#777" />
      ))}
      <path d="M66 31L86 117" stroke="#777" />
      <path d="M108 17l9 100" stroke="#d40000" strokeWidth="2" />
      <rect x="114" y="81" width="60" height="21" rx="3" fill="#b9d63a" />
      <text x="144" y="97" fontSize="14" fontWeight="600" textAnchor="middle" fill="#111">-90.2</text>
    </Meter>
  );
}

function CloseMark() {
  return <svg width="9" height="9" viewBox="0 0 9 9" aria-hidden="true"><path d="M1 1l7 7M8 1L1 8" stroke="#111" strokeWidth="1.5" /></svg>;
}

function SectionTitle({ children, open }: { children: React.ReactNode; open?: boolean }) {
  return <Section><span>{children}</span><Caret $up={open} /></Section>;
}

function SidePanel() {
  const y = (db: number) => 9 + (-db - 80) * 1.42;
  return (
    <Side>
      <DockTitle><span>Receive</span><Caret $big /><DockClose aria-label="Close panel"><CloseMark /></DockClose></DockTitle>
      <Tuner>
        <TunerTop><span>RX 1</span><span>+/- 5181 Hz</span></TunerTop>
        <TunerDigits>0.000.<Digits $edit>1</Digits><Digits>70.000</Digits></TunerDigits>
      </Tuner>
      <Presets>
        <SelectWrap>
          <PresetSelect aria-label="Preset" defaultValue="Default"><option>Default</option></PresetSelect>
          <Caret $big />
        </SelectWrap>
        <VolumeRow>
          <svg width="16" height="16" viewBox="0 0 16 16" aria-hidden="true"><path d="M2.5 2v14M6 9v7M9.5 12v4M13.5 8v8" stroke="#666" strokeWidth="2.5" strokeDasharray="2 1" /></svg>
          <svg width="18" height="18" viewBox="0 0 26 26" aria-hidden="true"><path d="M1 9h5l8-7v22l-8-7H1z" fill="#b5ac98" stroke="#888" /><path d="M17 8c3 3 3 7 0 10M21 4c5 5 5 12 0 17" fill="none" stroke="#7fcf72" strokeWidth="2" /></svg>
          <Range type="range" aria-label="Volume" $w={134} $fill defaultValue={81} />
          <output>79</output>
        </VolumeRow>
      </Presets>
      <SectionTitle open>IF Display</SectionTitle>
      <Stack>
        <Plot $h={86} aria-label="IF spectrum">
          <Trace id="ifFill" points={narrow} start={152} span={36} height={86} y={y} />
          <Grid top={9} step={14} count={6} from="7%" to="93%" />
          <PassBand from={35.5} to={64.3} height={86} />
        </Plot>
        {[false, true].map(right => (
          <DbLabels key={String(right)} $right={right} $small>
            {[80, 90, 100, 110, 120, 130].map(v => <span key={v}>-{v} dBm</span>)}
          </DbLabels>
        ))}
      </Stack>
      <Ruler $cells="1fr repeat(7, 10fr) 1fr" $size={10}>
        <Ticks step={0.5} major={5} span={36} start={152} />
        <i />
        {[155, 160, 165, 170, 175, 180, 185].map(v => <span key={v}>{v}</span>)}
      </Ruler>
      <MiniFall>
        <Waterfall id="ifGrain" points={narrow} start={152} span={36} cols={260} height={86} />
        <Fill><VerticalMarks at={[35.5, 49.9, 64.3]} color="#8fc98f" dash="5 4" /></Fill>
      </MiniFall>
      <SectionTitle open>Mode</SectionTitle>
      <Pad>{modes.map(m => <PadButton key={m} $on={m === "AM"}>{m}</PadButton>)}</Pad>
      <SectionTitle open>Filter</SectionTitle>
      <Pad>{filters.map(m => <PadButton key={m}>{m}</PadButton>)}</Pad>
      <SectionTitle open>AGC: Medium</SectionTitle>
      <AgcBody>
        <ToggleRow $gap={2}>
          {["Off", "Fast", "Med", "Slow"].map(t => <Toggle key={t} $w={37} $on={t === "Med"}>{t}</Toggle>)}
          <AgcTools>
            <IconTile aria-label="Reset"><svg width="18" height="16" viewBox="0 0 18 16"><path d="M0 6l8-6v4c7 0 10 4 9 9-2-4-5-5-9-5v4z" fill="#111" /></svg></IconTile>
            <IconTile $lit aria-label="Store"><svg width="18" height="14" viewBox="0 0 18 14"><rect x="1" y="3" width="16" height="8" rx="2" fill="#dfe9f2" stroke="#91a4b8" /><circle cx="6" cy="5" r="2.5" fill="#f2f6fa" stroke="#91a4b8" /><circle cx="11" cy="9" r="2.5" fill="#f2f6fa" stroke="#91a4b8" /></svg></IconTile>
            <IconTile aria-label="Graph"><svg width="17" height="17" viewBox="0 0 17 17"><path d="M1.5 1v14.5H16M3 13l3-4 3 1 2-5 2 1 2-5" fill="none" stroke="#444" /></svg></IconTile>
          </AgcTools>
        </ToggleRow>
        <AgcRows>
          {agc.map(([name, value, text]) => (
            <SliderRow key={name}>
              <label htmlFor={name}>{name}</label>
              <Range id={name} type="range" $w={126} defaultValue={value} />
              <output>{text}</output>
            </SliderRow>
          ))}
        </AgcRows>
      </AgcBody>
      <SectionTitle>CW: Off</SectionTitle>
      <SectionTitle>Noise Blanker: Off</SectionTitle>
      <SectionTitle open>Noise Reduction: Off</SectionTitle>
      <NrBody>
        <ToggleRow $gap={5}>{["Off", "NR1", "NR2", "NR3", "NR4"].map(t => <Toggle key={t} $w={34} $on={t === "Off"}>{t}</Toggle>)}</ToggleRow>
      </NrBody>
      <SectionTitle>Notch: Off</SectionTitle>
      <SectionTitle>Squelch: Off</SectionTitle>
    </Side>
  );
}

function MainDisplay() {
  const y = (db: number) => 13 + (-db - 20) * 3.22;
  const dbs = Array.from({ length: 12 }, (_, i) => 20 + i * 10);
  return (
    <Display>
      <Stack>
        <Plot $h={379} aria-label="Spectrum">
          <Trace id="mainFill" points={wide} start={0} span={900} height={379} y={y} />
          <Grid top={13} step={32.2} count={12} from="1.7%" to="98.2%" />
          <PassBand from={18.31} to={19.47} height={379} />
          <line x1="18.31%" x2="19.47%" y1="38" y2="38" stroke="#2fa52f" strokeWidth="2" />
          <rect x="18.66%" y="11" width="15" height="16" rx="2" fill="#024602" />
          <text x="18.89%" y="23" fontSize="10" fill="#fff" textAnchor="middle">1</text>
          <VerticalMarks at={hoverMarks} color="#ddd" dash="4 4" />
        </Plot>
        {[false, true].map(right => (
          <DbLabels key={String(right)} $right={right}>
            {dbs.map(v => <span key={v}>-{v} dBm</span>)}
          </DbLabels>
        ))}
        <Readout>
          <ReadoutRow>
            <strong>170.000</strong>
            <ReadoutNotes><span>RX 1<em>AM</em></span><small>+/- 5181 Hz</small></ReadoutNotes>
          </ReadoutRow>
          <SMeter />
        </Readout>
      </Stack>
      <Ruler $cells="1fr repeat(44, 2fr) 1fr" $size={10}>
        <Ticks step={10} major={20} span={900} />
        <i />
        {Array.from({ length: 44 }, (_, i) => <span key={i}>{(i + 1) * 20}</span>)}
      </Ruler>
      <Splitter />
      <FallPane>
        <Waterfall id="mainGrain" points={wideTrace} start={0} span={900} cols={1635} height={86} bursts={[[831, 849.5, 14, 44], [857.5, 862.5, 4, 16], [880, 900, 14, 24]]} />
        <Fill>
          <VerticalMarks at={bandMarks} color="#7faa90" dash="4 4" />
          <VerticalMarks at={hoverMarks} color="#ddd" dash="4 4" />
        </Fill>
        <Cursor width="56" height="56" viewBox="0 0 56 56">
          <circle cx="28" cy="28" r="26.5" fill="#7474b8" fillOpacity=".6" stroke="#f3c95a" strokeWidth="2" />
          <path d="M28 0v56" stroke="#bbb" strokeDasharray="4 4" />
          <path d="M30 29v17l4-4 2 6 3-1-2-6h5z" fill="#ff0" />
        </Cursor>
        <CursorTag>413.000</CursorTag>
        <Clock><small>UTC</small>01:08<sub>:15</sub></Clock>
        <SpanBox>{"Freq:  170 kHz\nSpan: ±450 kHz"}</SpanBox>
      </FallPane>
      <NavBar>
        <NavButton $w={25} aria-label="Back"><svg width="17" height="17" viewBox="0 0 17 17"><circle cx="8.5" cy="8.5" r="7" fill="#fff" stroke="#555" strokeWidth="1.5" /><path d="M8 5v7L4 8.5zM12 5v7L8 8.5z" /></svg></NavButton>
        <NavRuler $cells="1fr repeat(35, 2fr) 1fr" $size={12}>
          <Ticks step={5} major={50} span={1800} />
          <i />
          {Array.from({ length: 35 }, (_, i) => {
            const v = (i + 1) * 50;
            return <span key={v}>{v < 1000 ? v : `${Math.floor(v / 1000)}.${String(v % 1000).padStart(3, "0")}`}</span>;
          })}
        </NavRuler>
        <NavButton $w={36} aria-label="Keyboard"><svg width="16" height="13" viewBox="0 0 16 13"><rect x=".5" y="3.5" width="15" height="9" fill="#fff" stroke="#333" /><path d="M2 6h12M2 8h12M4 10.5h8" stroke="#333" strokeWidth="1.5" strokeDasharray="1.5 .8" /><path d="M8 3V1l4-1" stroke="#333" fill="none" /></svg></NavButton>
        <NavButton $w={50}>x2<svg width="5" height="8" viewBox="0 0 5 8"><path d="M0 0v8l5-4z" /></svg></NavButton>
        <NavButton $w={25} aria-label="Forward"><svg width="17" height="17" viewBox="0 0 17 17"><circle cx="8.5" cy="8.5" r="7" fill="#fff" stroke="#555" strokeWidth="1.5" /><path d="M9 5v7l4-3.5zM5 5v7l4-3.5z" /></svg></NavButton>
      </NavBar>
    </Display>
  );
}

const toolIcons: [string, React.ReactNode][] = [
  ["Apply", <path d="M2 8l4 5 6-12-6 8z" fill="#8dc21f" />],
  ["Run", <path d="M3 1v12l8-6z" fill="#3b77c8" />],
  ["Filter", <path d="M1 1h12L9 6v8H5V6z" fill="#777" />],
  ["Fit", <path d="M1.5 1v12M12.5 1v12M3 7h8M5 5L3 7l2 2M9 5l2 2-2 2" fill="none" stroke="#333" />],
  ["More", <path d="M0 6h3v3H0zM6 6h3v3H6zM11 6h3v3h-3z" fill="#222" />],
];

function Chevron({ up }: { up?: boolean }) {
  return <svg width="9" height="6" viewBox="0 0 9 6" aria-hidden="true"><path d={up ? "M1 5l3.500-4L8 5" : "M1 1l3.500 4L8 1"} fill="none" stroke="#333" strokeWidth="1.8" /></svg>;
}

function DatabasePanel() {
  return (
    <Database>
      <DockTitle><span>Frequency Database</span><Caret $big /><DockClose aria-label="Close panel"><CloseMark /></DockClose></DockTitle>
      <DbBody>
        <DbTools>{toolIcons.map(([name, g]) => <DbTool key={name} aria-label={name}><svg width="14" height="14" viewBox="0 0 14 14">{g}</svg></DbTool>)}</DbTools>
        <Sheet>
          <Table>
            <colgroup>{columns.map(([c, w]) => <col key={c} width={w} />)}</colgroup>
            <thead><tr>{columns.map(([c]) => <th key={c}>{c}</th>)}</tr></thead>
            <tbody>{stations.map((r, i) => <Row key={i} $tint={[0, 3, 4, 7, 8].includes(i)}>{r.map((v, k) => <td key={k}>{v}</td>)}</Row>)}</tbody>
          </Table>
        </Sheet>
        <ScrollTrack><Chevron up /><i /><Chevron /></ScrollTrack>
      </DbBody>
    </Database>
  );
}

const gauges: [string, string, number][] = [["CPU", "CPU: 11.0%", 2], ["GPU", "GPU: 36.6%", 30], ["Audio", "Audio: 24ms", 14], ["Size", "Size: 1.8 GB", 0]];

export default function App() {
  return (
    <Screen>
      <GlobalStyle />
      <Window>
        <TitleBar>
          <QuickBar>
            {quick.map(([name, g]) => <QuickButton key={name} aria-label={name}><svg width="16" height="16" viewBox="0 0 16 16">{g}</svg></QuickButton>)}
            <QuickButton aria-label="Customise"><svg width="8" height="16" viewBox="0 0 8 16"><path d="M0 5.5h7" stroke="#111" strokeWidth="1.5" /><path d="M0 8h7l-3.5 4z" /></svg></QuickButton>
          </QuickBar>
          <WindowTitle>FDM-S2 :: SDR Console v3.0.25</WindowTitle>
          <Caption aria-label="Minimise"><svg width="10" height="10"><path d="M0 5.5h10" stroke="#111" /></svg></Caption>
          <Caption aria-label="Restore"><svg width="11" height="11"><path d="M.5 3.500h7v7h-7zM3 3.500v-3h7.500v7H8" fill="none" stroke="#111" /></svg></Caption>
          <Caption aria-label="Close"><svg width="11" height="11"><path d="M.5.5l10 10M10.500.5l-10 10" stroke="#111" /></svg></Caption>
        </TitleBar>
        <TabBar>
          {["Home", "View", "Receive", "Transmit", "Rec/Playback", "Favourites", "Memories", "Tools", "Help"].map(t => <Tab key={t} $active={t === "Rec/Playback"}>{t}</Tab>)}
          <TabTools>
            <ToolButton $on aria-label="Display 1"><Monitor /></ToolButton>
            <ToolButton aria-label="Display 2"><Monitor /></ToolButton>
            <ToolButton aria-label="Collapse"><svg width="13" height="15" viewBox="0 0 13 15"><circle cx="6.5" cy="7.5" r="6" fill="#fff" stroke="#888" /><path d="M3 6l3.5-3L10 6M3 9l3.5 3L10 9M1 7.5h11" fill="none" stroke="#555" /></svg></ToolButton>
            <ToolButton>Style<Caret /></ToolButton>
            <ToolButton aria-label="Settings"><Icon name="options" size={18} /></ToolButton>
          </TabTools>
        </TabBar>
        <Ribbon>
          {groups.map(g => (
            <Group key={g.name}>
              <GroupBody>
                {g.items.map((it, i) => it === "|" ? <Divider key={i} /> : (
                  <BigButton key={i} $w={it[2]} $on={it[3]?.on} $dim={it[3]?.dim}>
                    <Icon name={it[1]} />
                    <span>{it[0]}</span>
                    {it[3]?.second && <span>{it[3].second}</span>}
                    {it[3]?.drop && <DropCaret />}
                  </BigButton>
                ))}
                {g.name === "Data :: Scheduler" && (
                  <Checks>
                    <CheckLabel><CheckBox type="checkbox" defaultChecked />Show in status bar</CheckLabel>
                    <CheckLabel><CheckBox type="checkbox" defaultChecked />Start automatically</CheckLabel>
                  </Checks>
                )}
              </GroupBody>
              <GroupName>{g.name}</GroupName>
            </Group>
          ))}
        </Ribbon>
        <Workspace>
          <SidePanel />
          <Display>
            <Workspace>
              <MainDisplay />
              <LevelColumn>
                <AutoButton>Auto</AutoButton>
                <Levels>
                  {Array.from({ length: 31 }, (_, i) => (i + 1) * 5).map(v => <Level key={v} $chip={v >= 35 && v <= 115}><span>-{v}</span></Level>)}
                </Levels>
              </LevelColumn>
            </Workspace>
            <DatabasePanel />
          </Display>
        </Workspace>
        <StatusBar>
          <span>FDM-S2, BW = 1.536 MHz</span>
          <span>Scheduler: On</span>
          <Icon name="clapper" size={15} />
          <span>--:00:16, ▪ 38.8 MB (2)</span>
          {gauges.map(([name, text, part]) => (
            <React.Fragment key={name}>
              <span>{text}</span>
              <Gauge role="meter" aria-label={name} aria-valuenow={part}><GaugeFill $part={part} /></Gauge>
            </React.Fragment>
          ))}
        </StatusBar>
        <TaskStrip />
      </Window>

      <AppButton aria-label="Application menu">
        <svg width="41" height="41" viewBox="0 0 41 41">
          <circle cx="20.5" cy="20.5" r="19.5" fill="#dcdcda" stroke="#777" />
          <path d="M14 12v15M14 18h3M14 26h3" stroke="#555" />
          <path d="M10 8h5v5h-5zM15 16h5v5h-5zM15 24h5v5h-5z" fill="#8fc1e4" stroke="#2b5878" strokeWidth="1.5" />
          <path d="M18 10.5h9M23 18.5h8M23 26.5h8" stroke="#555" strokeWidth="1.5" strokeDasharray="3 1" />
        </svg>
      </AppButton>

      <Player>
        <Seek type="range" aria-label="Position" min={0} max={1000} defaultValue={380} />
        <Times><span>0:00:14</span><span>0:00:25</span></Times>
        <Controls>
          <ControlSet>
            <PlayerControl label="Volume"><path d="M1 11h5l6-7v23l-6-7H1zM16 11q3 5 0 10M20 8q5 8 0 16M24 4q8 12 0 24" /></PlayerControl>
            <PlayerControl label="Subtitles"><path d="M1 4h30v20H10l-5 5v-5H1zM5 16h22M5 20h22" /></PlayerControl>
          </ControlSet>
          <ControlSet>
            <PlayerControl label="Skip back"><path d="M2 3v8h8M2 11C8 0 24-1 30 11" /><text x="16" y="29" fontSize="16" textAnchor="middle" fill="#fff" stroke="none">10</text></PlayerControl>
            <PlayerControl label="Play" lit><path d="M9 4l17 12L9 28z" /></PlayerControl>
            <PlayerControl label="Skip forward"><path d="M30 3v8h-8M30 11C24 0 8-1 2 11" /><text x="16" y="29" fontSize="16" textAnchor="middle" fill="#fff" stroke="none">30</text></PlayerControl>
          </ControlSet>
          <ControlSet $end>
            <PlayerControl label="Edit"><path d="M1 31l2-9L24 2q3-2 5 1t0 5L9 28zM20 6l6 6M3 22l6 6" /></PlayerControl>
            <PlayerControl label="Mini view"><path d="M1 6h30v20H1zM12 13h15v10H12zM15 21l3-5 2 5M22 16h2v4" /></PlayerControl>
            <PlayerControl label="Exit full screen"><path d="M30 1L18 13M18 5v8h8M2 31l12-12M6 19h8v8" /></PlayerControl>
            <PlayerControl label="More"><path d="M3 14.5h3v3H3zM14 14.5h3v3h-3zM25 14.5h3v3h-3z" fill="#fff" stroke="none" /></PlayerControl>
          </ControlSet>
        </Controls>
      </Player>

      <BackButton aria-label="Back"><svg width="20" height="16" viewBox="0 0 20 16" {...line}><path d="M9 1L2 8l7 7M2 8h17" /></svg></BackButton>

      <Ring $place="right: 14px; top: 467px;" width="254" height="144"><ellipse cx="127" cy="72" rx="123" ry="68" fill="none" stroke="#ff7f27" strokeWidth="5" /></Ring>
      <Ring $place="left: 1497px; bottom: 210px;" width="270" height="190"><ellipse cx="135" cy="95" rx="131" ry="91" fill="none" stroke="#ff7f27" strokeWidth="5" /></Ring>
    </Screen>
  );
}
